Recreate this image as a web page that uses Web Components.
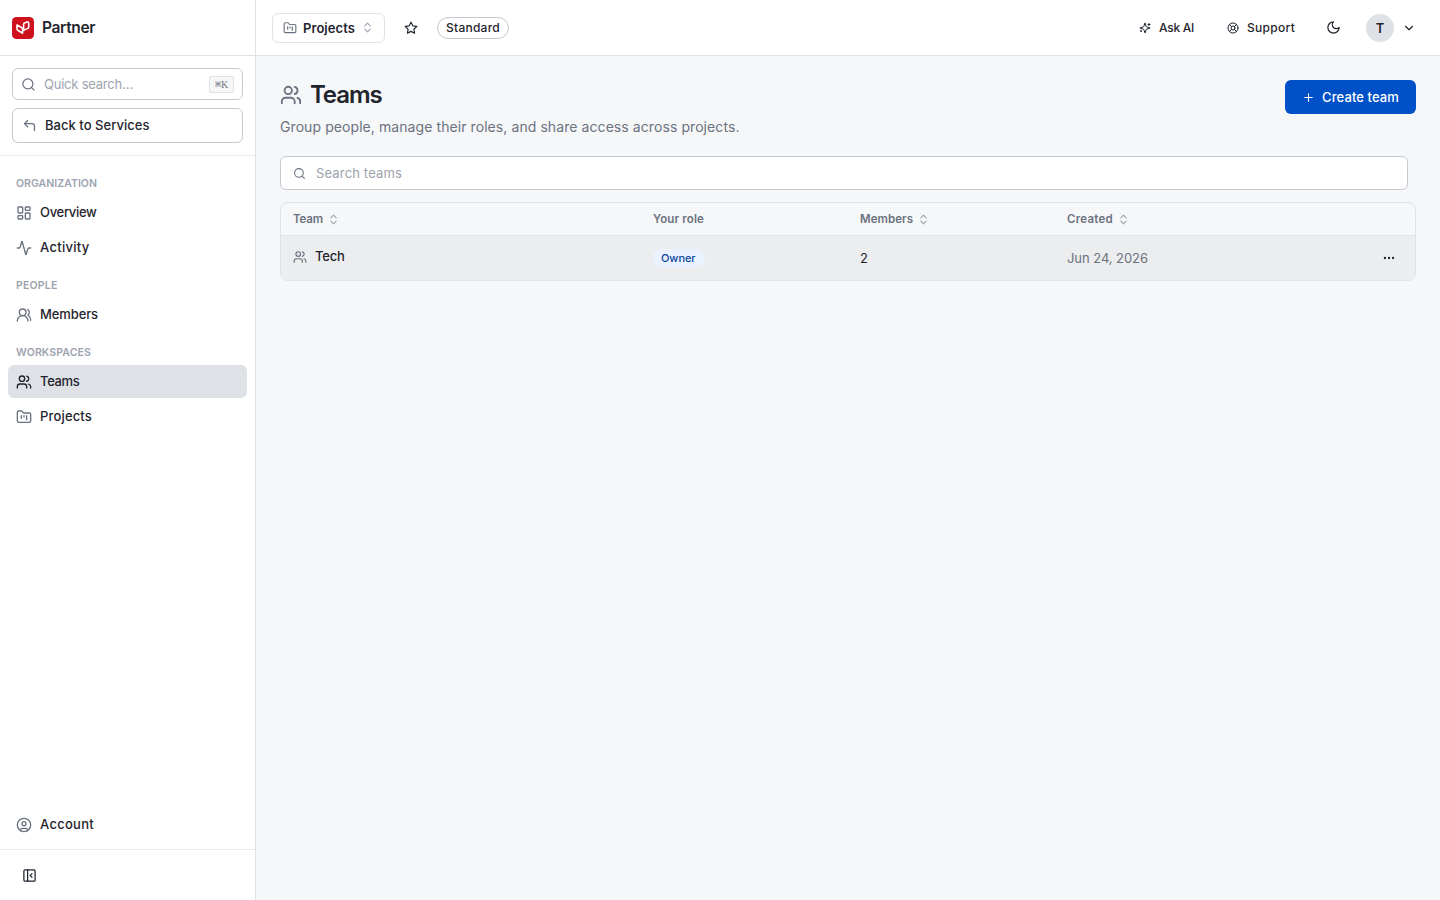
<!DOCTYPE html>
<html lang="en">
<head>
<meta charset="utf-8">
<title>Teams</title>
<style>
	html, body {
		height: 100%;
		margin: 0;
	}
	body {
		--ink: #1f242d;
		--muted: #6b7280;
		--faint: #9ca3af;
		--line: #dee1e6;
		--line-strong: #c4cad1;
		--surface: #f6f7f9;
		--active: #dee1e6;
		color: var(--ink);
		background: var(--surface);
		font: 500 13px/20px Inter, "Liberation Sans", sans-serif;
	}
</style>
</head>
<body>
<app-shell></app-shell>

<script>
(function(){

	const icons = {
		search: '<circle cx="11" cy="11" r="8"/><path d="m21 21-4.3-4.3"/>',
		back: '<path d="M20 20v-7a4 4 0 0 0-4-4H4"/><path d="M9 14 4 9l5-5"/>',
		dashboard: '<rect width="7" height="9" x="3" y="3" rx="1"/><rect width="7" height="5" x="14" y="3" rx="1"/><rect width="7" height="9" x="14" y="12" rx="1"/><rect width="7" height="5" x="3" y="16" rx="1"/>',
		activity: '<path d="M22 12h-2.5a2 2 0 0 0-1.9 1.5l-2.4 8.3a.25.25 0 0 1-.5 0L9.2 2.2a.25.25 0 0 0-.5 0l-2.3 8.3A2 2 0 0 1 4.5 12H2"/>',
		members: '<path d="M18 21a8 8 0 0 0-16 0"/><circle cx="10" cy="8" r="5"/><path d="M22 20c0-3.4-2-6.5-4-8a5 5 0 0 0-.5-8.3"/>',
		users: '<path d="M16 21v-2a4 4 0 0 0-4-4H6a4 4 0 0 0-4 4v2"/><circle cx="9" cy="7" r="4"/><path d="M22 21v-2a4 4 0 0 0-3-3.9"/><path d="M16 3.1a4 4 0 0 1 0 7.8"/>',
		folder: '<path d="M4 20h16a2 2 0 0 0 2-2V8a2 2 0 0 0-2-2h-7.9a2 2 0 0 1-1.7-.9l-.8-1.2A2 2 0 0 0 7.9 3H4a2 2 0 0 0-2 2v13a2 2 0 0 0 2 2Z"/><path d="M8 10v4M12 10v2M16 10v6"/>',
		account: '<circle cx="12" cy="12" r="10"/><circle cx="12" cy="10" r="3"/><path d="M7 20.7V19a2 2 0 0 1 2-2h6a2 2 0 0 1 2 2v1.7"/>',
		collapse: '<rect width="18" height="18" x="3" y="3" rx="2"/><path d="M9 3v18M16 15l-3-3 3-3"/>',
		sort: '<path d="m7 15 5 5 5-5M7 9l5-5 5 5"/>',
		star: '<path d="m12 2 3.1 6.3 6.9 1-5 4.9 1.2 6.8-6.2-3.2L5.8 21 7 14.2 2 9.3l6.9-1Z"/>',
		sparkles: '<path d="M9.9 15.5A2 2 0 0 0 8.5 14.1l-6.1-1.6a.5.5 0 0 1 0-1L8.5 9.9A2 2 0 0 0 9.9 8.5l1.6-6.1a.5.5 0 0 1 1 0l1.6 6.1A2 2 0 0 0 15.5 9.9l6.1 1.6a.5.5 0 0 1 0 1l-6.1 1.6a2 2 0 0 0-1.4 1.4l-1.6 6.1a.5.5 0 0 1-1 0Z"/><path d="M20 3v4M22 5h-4M4 17v2M5 18H3"/>',
		support: '<circle cx="12" cy="12" r="10"/><path d="m4.9 4.9 4.3 4.3M14.8 9.2l4.3-4.3M14.8 14.8l4.3 4.3M9.2 14.8l-4.3 4.3"/><circle cx="12" cy="12" r="4"/>',
		moon: '<path d="M12 3a6 6 0 0 0 9 9 9 9 0 1 1-9-9Z"/>',
		down: '<path d="m6 9 6 6 6-6"/>',
		plus: '<path d="M5 12h14M12 5v14"/>',
		more: '<g fill="currentColor"><circle cx="5" cy="12" r="1"/><circle cx="12" cy="12" r="1"/><circle cx="19" cy="12" r="1"/></g>'
	};

	function define(name, html, setup) {
		const tmpl = document.createElement("template");
		tmpl.innerHTML = html;

		customElements.define(name, class extends HTMLElement {
			constructor() {
				super();
				this.attachShadow({mode: "open"}).appendChild(tmpl.content.cloneNode(true));
			}
			connectedCallback() {
				if ( setup ) setup(this, this.shadowRoot);
			}
		});
	}

	// <ui-icon name="" size="" stroke="">
	define("ui-icon", `
		<style>
			:host { display: block; flex: none; }
			svg { display: block; fill: none; stroke: currentColor; stroke-linecap: round; stroke-linejoin: round; }
		</style>
		<svg viewBox="0 0 24 24"></svg>
	`, (host, root) => {
		const svg = root.querySelector("svg");
		const size = host.getAttribute("size") || 16;
		svg.setAttribute("width", size);
		svg.setAttribute("height", size);
		svg.setAttribute("stroke-width", host.getAttribute("stroke") || 2);
		svg.innerHTML = icons[host.getAttribute("name")];
	});

	// Label tracked out (or in) to the given width
	define("ui-label", `
		<style>
			:host { display: block; flex: none; white-space: nowrap; }
			span { display: inline-block; }
		</style>
		<span><slot></slot></span>
	`, (host, root) => {
		const width = parseFloat(host.getAttribute("width"));
		const span = root.querySelector("span");
		const count = host.textContent.length;
		const spacing = (width - span.getBoundingClientRect().width) / count;
		host.style.width = width + "px";
		span.style.letterSpacing = spacing.toFixed(3) + "px";
	});

	define("brand-logo", `
		<style>
			:host { display: block; width: 22px; height: 22px; }
			svg { display: block; }
		</style>
		<svg width="22" height="22" viewBox="0 0 22 22" fill="none" stroke="#fff" stroke-width="1.6" stroke-linejoin="round">
			<rect width="22" height="22" rx="4.5" fill="#cf101d" stroke="none"/>
			<path d="M5 8V11.800Q5 12.800 5.800 13.300L10.600 16.200V12.300Q10.600 11.300 9.800 10.800Z"/>
			<path d="M11.600 13.400V7.200Q11.600 6.400 12.400 6L15.200 5Q16.700 4.600 16.700 6V10Q16.700 11 15.800 11.400Z"/>
		</svg>
	`);

	define("nav-item", `
		<style>
			:host {
				display: flex;
				align-items: center;
				gap: 8px;
				height: 33px;
				padding: 0 8px;
				border-radius: 6px;
			}
			:host([active]) { background: var(--active); }
			ui-icon { color: var(--muted); }
			:host([active]) ui-icon { color: var(--ink); }
			::slotted(ui-label) { margin-bottom: 1px; }
		</style>
		<slot></slot>
	`, (host, root) => {
		const icon = document.createElement("ui-icon");
		icon.setAttribute("name", host.getAttribute("icon"));
		root.insertBefore(icon, root.querySelector("slot"));
	});

	define("nav-group", `
		<style>
			:host {
				display: flex;
				flex-direction: column;
				gap: 2px;
				margin-bottom: 13px;
			}
			.heading {
				padding: 1px 8px 2px;
				color: var(--faint);
				font-size: 10.5px;
				font-weight: 600;
				line-height: 16px;
			}
		</style>
		<div class="heading"><slot name="heading"></slot></div>
		<slot></slot>
	`);

	define("app-sidebar", `
		<style>
			:host {
				display: flex;
				flex-direction: column;
				box-sizing: border-box;
				width: 256px;
				height: 100%;
				background: #fff;
				border-right: 1px solid var(--line);
			}
			.brand {
				display: flex;
				align-items: center;
				gap: 8px;
				height: 55px;
				padding: 0 12px;
				border-bottom: 1px solid var(--line);
				font-size: 15.5px;
				font-weight: 600;
			}
			.tools {
				display: flex;
				flex-direction: column;
				gap: 8px;
				padding: 12px;
				border-bottom: 1px solid #eaecef;
			}
			.box {
				display: flex;
				align-items: center;
				box-sizing: border-box;
				height: 32px;
				padding: 0 8px;
				border: 1px solid var(--line-strong);
				border-radius: 6px;
			}
			.box ui-icon { color: var(--muted); }
			.search { gap: 8px; color: var(--faint); font-weight: 400; }
			.back { height: 35px; padding: 0 9px; gap: 8px; }
			.back ui-label { margin-bottom: 1px; }
			kbd {
				box-sizing: border-box;
				width: 25px;
				height: 17px;
				margin-left: auto;
				border: 1px solid var(--line);
				border-radius: 2px;
				background: var(--surface);
				color: var(--muted);
				font: 10px/15px "Liberation Serif", "DejaVu Sans Mono", serif;
				text-align: center;
			}
			nav {
				flex: 1;
				display: flex;
				flex-direction: column;
				padding: 19px 8px 8px;
			}
			.last { margin-top: auto; }
			.foot {
				display: flex;
				align-items: center;
				height: 50px;
				padding-left: 22px;
				border-top: 1px solid #eaecef;
			}
		</style>
		<div class="brand"><brand-logo></brand-logo><ui-label width="53">Partner</ui-label></div>
		<div class="tools">
			<div class="box search"><ui-icon name="search" size="15"></ui-icon><ui-label width="89">Quick search…</ui-label><kbd>⌘K</kbd></div>
			<div class="box back"><ui-icon name="back" size="15"></ui-icon><ui-label width="104.5">Back to Services</ui-label></div>
		</div>
		<nav>
			<nav-group>
				<ui-label slot="heading" width="81">ORGANIZATION</ui-label>
				<nav-item icon="dashboard"><ui-label width="56.5">Overview</ui-label></nav-item>
				<nav-item icon="activity"><ui-label width="49.5">Activity</ui-label></nav-item>
			</nav-group>
			<nav-group>
				<ui-label slot="heading" width="41.5">PEOPLE</ui-label>
				<nav-item icon="members"><ui-label width="58">Members</ui-label></nav-item>
			</nav-group>
			<nav-group>
				<ui-label slot="heading" width="75">WORKSPACES</ui-label>
				<nav-item icon="users" active><ui-label width="39.5">Teams</ui-label></nav-item>
				<nav-item icon="folder"><ui-label width="52">Projects</ui-label></nav-item>
			</nav-group>
			<nav-item class="last" icon="account"><ui-label width="54">Account</ui-label></nav-item>
		</nav>
		<div class="foot"><ui-icon name="collapse" size="15"></ui-icon></div>
	`);

	define("app-topbar", `
		<style>
			:host {
				display: flex;
				align-items: center;
				height: 55px;
				padding: 0 24px 0 16px;
				background: #fff;
				border-bottom: 1px solid var(--line);
				font-size: 12px;
			}
			.picker {
				display: flex;
				align-items: center;
				box-sizing: border-box;
				width: 113px;
				height: 30px;
				padding: 0 10px;
				gap: 6px;
				border: 1px solid var(--line);
				border-radius: 6px;
				font-size: 13px;
				font-weight: 600;
			}
			.picker ui-icon { color: var(--muted); }
			.star { margin: 0 19px; }
			.plan {
				display: flex;
				box-sizing: border-box;
				height: 22px;
				padding: 0 8px;
				border: 1px solid var(--line-strong);
				border-radius: 11px;
			}
			.actions {
				display: flex;
				align-items: center;
				margin-left: auto;
			}
			.action {
				display: flex;
				align-items: center;
				gap: 8px;
				margin-right: 33px;
			}
			.support { margin-right: 31px; }
			.avatar {
				width: 28px;
				height: 28px;
				margin: 0 8px 0 25px;
				border-radius: 50%;
				background: var(--active);
				font-size: 13px;
				font-weight: 600;
				line-height: 28px;
				text-align: center;
			}
		</style>
		<div class="picker">
			<ui-icon name="folder" size="14"></ui-icon>
			<ui-label width="52">Projects</ui-label>
			<ui-icon name="sort" size="13" style="color:var(--faint)"></ui-icon>
		</div>
		<ui-icon class="star" name="star" size="14"></ui-icon>
		<div class="plan"><ui-label width="54">Standard</ui-label></div>
		<div class="actions">
			<div class="action"><ui-icon name="sparkles" size="12"></ui-icon><ui-label width="35">Ask AI</ui-label></div>
			<div class="action support"><ui-icon name="support" size="12"></ui-icon><ui-label width="48">Support</ui-label></div>
			<ui-icon name="moon" size="15"></ui-icon>
			<div class="avatar">T</div>
			<ui-icon name="down" size="14"></ui-icon>
		</div>
	`);

	define("page-header", `
		<style>
			:host {
				display: flex;
				justify-content: space-between;
				align-items: flex-start;
				height: 76px;
			}
			h1 {
				display: flex;
				align-items: center;
				gap: 8px;
				margin: 0;
				font-size: 24px;
				font-weight: 600;
				line-height: 30px;
			}
			h1 ui-icon { color: var(--muted); }
			.lead {
				margin-top: 7px;
				color: var(--muted);
				font-size: 14px;
				font-weight: 400;
			}
			button {
				display: flex;
				align-items: center;
				gap: 7px;
				height: 34px;
				padding: 0 17px;
				border: 0;
				border-radius: 6px;
				background: #0050c8;
				color: #fff;
				font: inherit;
			}
		</style>
		<div>
			<h1><ui-icon name="users" size="22"></ui-icon><ui-label width="71.5">Teams</ui-label></h1>
			<div class="lead"><ui-label width="459.5">Group people, manage their roles, and share access across projects.</ui-label></div>
		</div>
		<button><ui-icon name="plus" size="13"></ui-icon><ui-label width="77">Create team</ui-label></button>
	`);

	define("search-field", `
		<style>
			:host {
				display: flex;
				align-items: center;
				gap: 10px;
				box-sizing: border-box;
				height: 34px;
				margin: 0 8px 12px 0;
				padding: 0 12px;
				border: 1px solid var(--line-strong);
				border-radius: 6px;
				background: #fff;
				color: var(--faint);
				font-weight: 400;
			}
			ui-icon { color: var(--muted); }
		</style>
		<ui-icon name="search" size="13"></ui-icon>
		<slot></slot>
	`);

	define("team-table", `
		<style>
			:host {
				display: block;
				overflow: hidden;
				border: 1px solid var(--line);
				border-radius: 8px;
			}
			.row {
				display: grid;
				grid-template-columns: 360px 207px 207px 1fr;
				align-items: center;
				height: 44px;
				background: #ecedef;
			}
			.row > div {
				display: flex;
				align-items: center;
				padding: 0 12px;
			}
			.head {
				height: 32px;
				border-bottom: 1px solid var(--line);
				background: none;
				color: var(--muted);
				font-size: 11.5px;
				font-weight: 600;
			}
			.head > div { gap: 4px; }
			.head ui-icon { color: var(--faint); }
			.row .team { gap: 8px; padding-bottom: 3px; }
			.team ui-icon { color: var(--muted); }
			.team ui-label { margin-bottom: 1px; }
			.badge {
				padding: 0 9px 0 8px;
				border-radius: 9px;
				background: #ebf2ff;
				color: #0b47a1;
				font-size: 11px;
				line-height: 18px;
			}
			.count { font-weight: 400; }
			.row .date { justify-content: space-between; padding-right: 19px; color: var(--muted); font-weight: 400; }
			.date ui-icon { color: var(--ink); }
		</style>
		<div class="row head">
			<div><ui-label width="30">Team</ui-label><ui-icon name="sort" size="13"></ui-icon></div>
			<div><ui-label width="51">Your role</ui-label></div>
			<div><ui-label width="53">Members</ui-label><ui-icon name="sort" size="13"></ui-icon></div>
			<div><ui-label width="46">Created</ui-label><ui-icon name="sort" size="13"></ui-icon></div>
		</div>
		<div class="row">
			<div class="team"><ui-icon name="users" size="14"></ui-icon><ui-label width="29.5">Tech</ui-label></div>
			<div><div class="badge"><ui-label width="34.5">Owner</ui-label></div></div>
			<div class="count">2</div>
			<div class="date"><ui-label width="81">Jun 24, 2026</ui-label><ui-icon name="more" size="14"></ui-icon></div>
		</div>
	`);

	define("app-shell", `
		<style>
			:host {
				display: grid;
				grid-template-columns: 256px 1fr;
				height: 100%;
			}
			main { padding: 24px; }
		</style>
		<app-sidebar></app-sidebar>
		<div>
			<app-topbar></app-topbar>
			<main>
				<page-header></page-header>
				<search-field><ui-label width="86">Search teams</ui-label></search-field>
				<team-table></team-table>
			</main>
		</div>
	`);
}())
</script>
</body>
</html>
